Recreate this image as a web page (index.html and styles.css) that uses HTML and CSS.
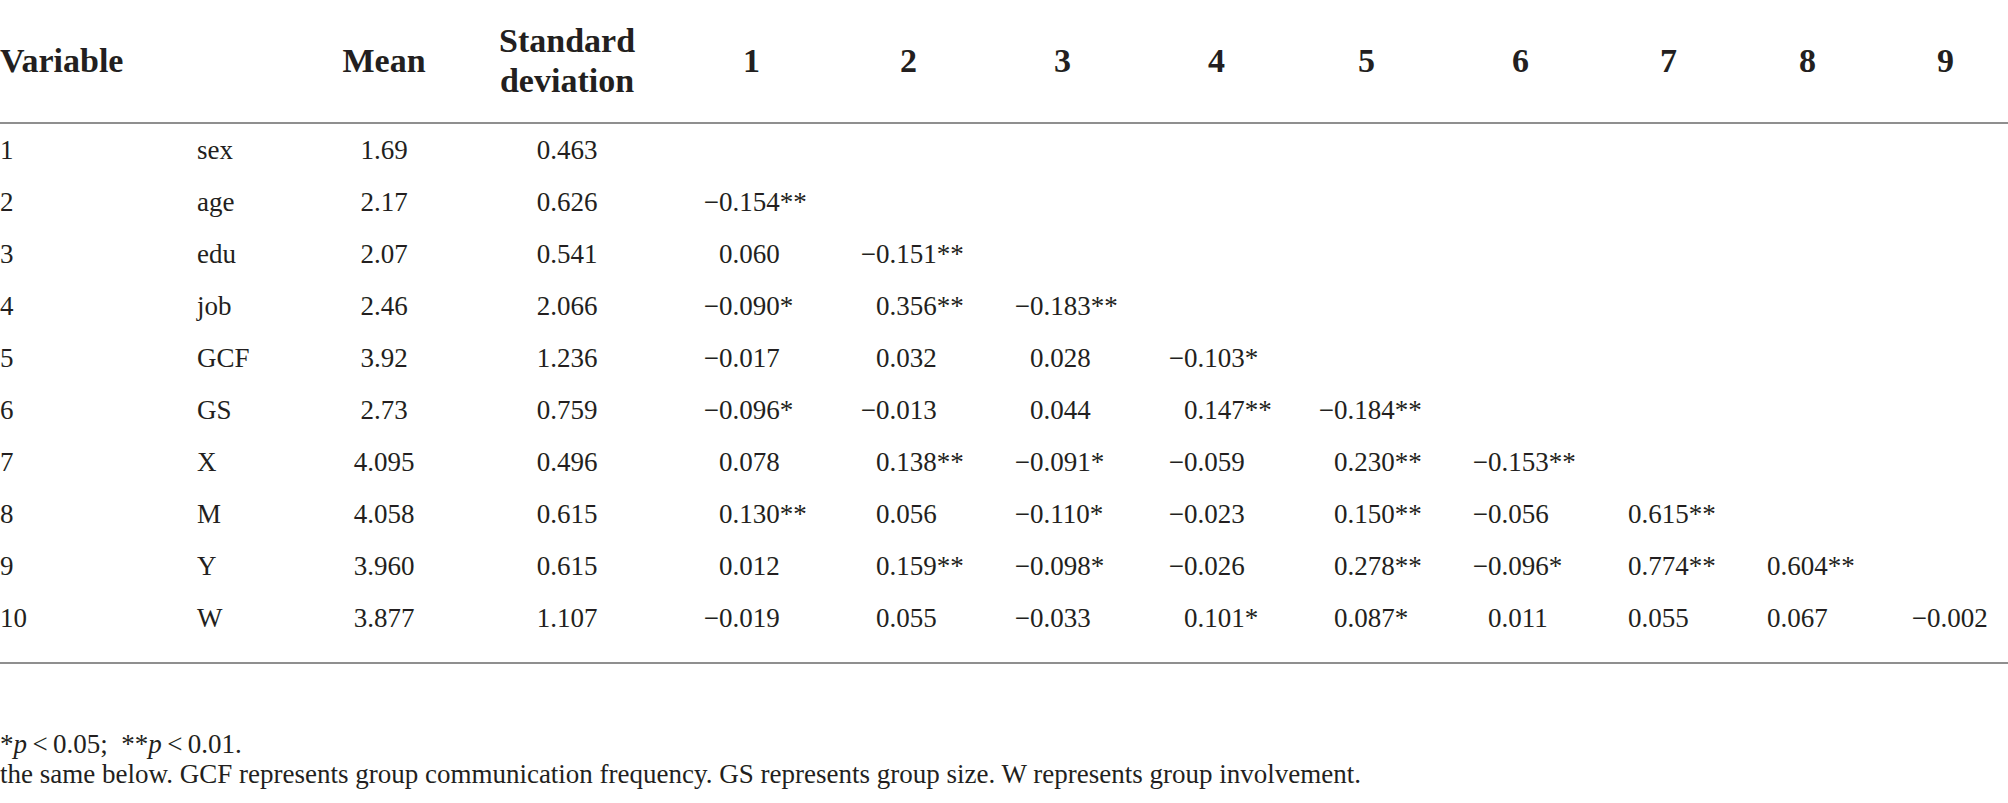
FILE: index.html
```html
<!DOCTYPE html>
<html lang="en">
<head>
  <meta charset="UTF-8">
  <title>Correlation table</title>
  <link rel="stylesheet" href="styles.css">
</head>
<body>

<table class="corr">
  <colgroup>
    <col class="c-no">
    <col class="c-var">
    <col class="c-mean">
    <col class="c-sd">
    <col class="c1">
    <col class="c2">
    <col class="c3">
    <col class="c4">
    <col class="c5">
    <col class="c6">
    <col class="c7">
    <col class="c8">
    <col class="c9">
  </colgroup>
  <thead>
    <tr>
      <th colspan="2" class="left">Variable</th>
      <th>Mean</th>
      <th class="sd">Standard<br>deviation</th>
      <th class="h">1</th>
      <th class="h">2</th>
      <th class="h">3</th>
      <th class="h">4</th>
      <th class="h">5</th>
      <th class="h">6</th>
      <th class="h">7</th>
      <th class="h">8</th>
      <th class="h">9</th>
    </tr>
  </thead>
  <tbody>
    <tr>
      <td>1</td><td>sex</td><td class="mid">1.69</td><td class="mid sd">0.463</td>
      <td></td><td></td><td></td><td></td><td></td><td></td><td></td><td></td><td></td>
    </tr>
    <tr>
      <td>2</td><td>age</td><td class="mid">2.17</td><td class="mid sd">0.626</td>
      <td class="v n">&minus;0.154**</td>
      <td></td><td></td><td></td><td></td><td></td><td></td><td></td><td></td>
    </tr>
    <tr>
      <td>3</td><td>edu</td><td class="mid">2.07</td><td class="mid sd">0.541</td>
      <td class="v">0.060</td>
      <td class="v n">&minus;0.151**</td>
      <td></td><td></td><td></td><td></td><td></td><td></td><td></td>
    </tr>
    <tr>
      <td>4</td><td>job</td><td class="mid">2.46</td><td class="mid sd">2.066</td>
      <td class="v n">&minus;0.090*</td>
      <td class="v">0.356**</td>
      <td class="v n">&minus;0.183**</td>
      <td></td><td></td><td></td><td></td><td></td><td></td>
    </tr>
    <tr>
      <td>5</td><td>GCF</td><td class="mid">3.92</td><td class="mid sd">1.236</td>
      <td class="v n">&minus;0.017</td>
      <td class="v">0.032</td>
      <td class="v">0.028</td>
      <td class="v n">&minus;0.103*</td>
      <td></td><td></td><td></td><td></td><td></td>
    </tr>
    <tr>
      <td>6</td><td>GS</td><td class="mid">2.73</td><td class="mid sd">0.759</td>
      <td class="v n">&minus;0.096*</td>
      <td class="v n">&minus;0.013</td>
      <td class="v">0.044</td>
      <td class="v">0.147**</td>
      <td class="v n">&minus;0.184**</td>
      <td></td><td></td><td></td><td></td>
    </tr>
    <tr>
      <td>7</td><td>X</td><td class="mid">4.095</td><td class="mid sd">0.496</td>
      <td class="v">0.078</td>
      <td class="v">0.138**</td>
      <td class="v n">&minus;0.091*</td>
      <td class="v n">&minus;0.059</td>
      <td class="v">0.230**</td>
      <td class="v n">&minus;0.153**</td>
      <td></td><td></td><td></td>
    </tr>
    <tr>
      <td>8</td><td>M</td><td class="mid">4.058</td><td class="mid sd">0.615</td>
      <td class="v">0.130**</td>
      <td class="v">0.056</td>
      <td class="v n">&minus;0.110*</td>
      <td class="v n">&minus;0.023</td>
      <td class="v">0.150**</td>
      <td class="v n">&minus;0.056</td>
      <td class="v">0.615**</td>
      <td></td><td></td>
    </tr>
    <tr>
      <td>9</td><td>Y</td><td class="mid">3.960</td><td class="mid sd">0.615</td>
      <td class="v">0.012</td>
      <td class="v">0.159**</td>
      <td class="v n">&minus;0.098*</td>
      <td class="v n">&minus;0.026</td>
      <td class="v">0.278**</td>
      <td class="v n">&minus;0.096*</td>
      <td class="v">0.774**</td>
      <td class="v">0.604**</td>
      <td></td>
    </tr>
    <tr class="last">
      <td>10</td><td>W</td><td class="mid">3.877</td><td class="mid sd">1.107</td>
      <td class="v n">&minus;0.019</td>
      <td class="v">0.055</td>
      <td class="v n">&minus;0.033</td>
      <td class="v">0.101*</td>
      <td class="v">0.087*</td>
      <td class="v">0.011</td>
      <td class="v">0.055</td>
      <td class="v">0.067</td>
      <td class="v n">&minus;0.002</td>
    </tr>
  </tbody>
</table>

<div class="notes">
  <p>*<i>p</i>&thinsp;&lt;&thinsp;0.05; &nbsp;**<i>p</i>&thinsp;&lt;&thinsp;0.01.</p>
  <p>the same below. GCF represents group communication frequency. GS represents group size. W represents group involvement.</p>
</div>

</body>
</html>
```

FILE: styles.css
```css
body {
  font-family: "Liberation Serif", "Times New Roman", serif;
  color: #231f20;
  background: #fff;
  margin: 0;
  padding: 0;
}
.corr {
  width: 2008px;
  table-layout: fixed;
  border-collapse: separate;
  border-spacing: 0;
}
.c-no { width: 197px; }
.c-var { width: 123px; }
.c-mean { width: 128px; }
.c-sd { width: 251px; }
.c1 { width: 157px; }
.c2 { width: 154px; }
.c3 { width: 154px; }
.c4 { width: 150px; }
.c5 { width: 154px; }
.c6 { width: 140px; }
.c7 { width: 139px; }
.c8 { width: 160px; }
.c9 { width: 101px; }

.corr th {
  font-size: 34px;
  font-weight: bold;
  line-height: 40px;
  padding: 21px 0;
  text-align: center;
  vertical-align: middle;
  border-bottom: 2px solid #8f8f8f;
  white-space: nowrap;
}
.corr th.left {
  text-align: left;
}
.corr th.h {
  text-align: left;
  padding-left: 44px;
}
.corr th.h:nth-child(10),
.corr th.h:nth-child(11) {
  padding-left: 52px;
}
.corr th.h:nth-child(12) {
  padding-left: 30px;
}
.corr .sd {
  padding-right: 13px;
}

.corr td {
  font-size: 27px;
  line-height: 52px;
  padding: 0;
  text-align: left;
  vertical-align: top;
  white-space: nowrap;
}
.corr td.mid {
  text-align: center;
}
.corr td.v {
  padding-left: 20px;
}
.corr td.n {
  text-indent: -0.564em;
}
.corr tr.last td {
  padding-bottom: 18px;
  border-bottom: 2px solid #8f8f8f;
}

.notes {
  margin-top: 65px;
  font-size: 27px;
  line-height: 30px;
}
.notes p {
  margin: 0;
}
```
